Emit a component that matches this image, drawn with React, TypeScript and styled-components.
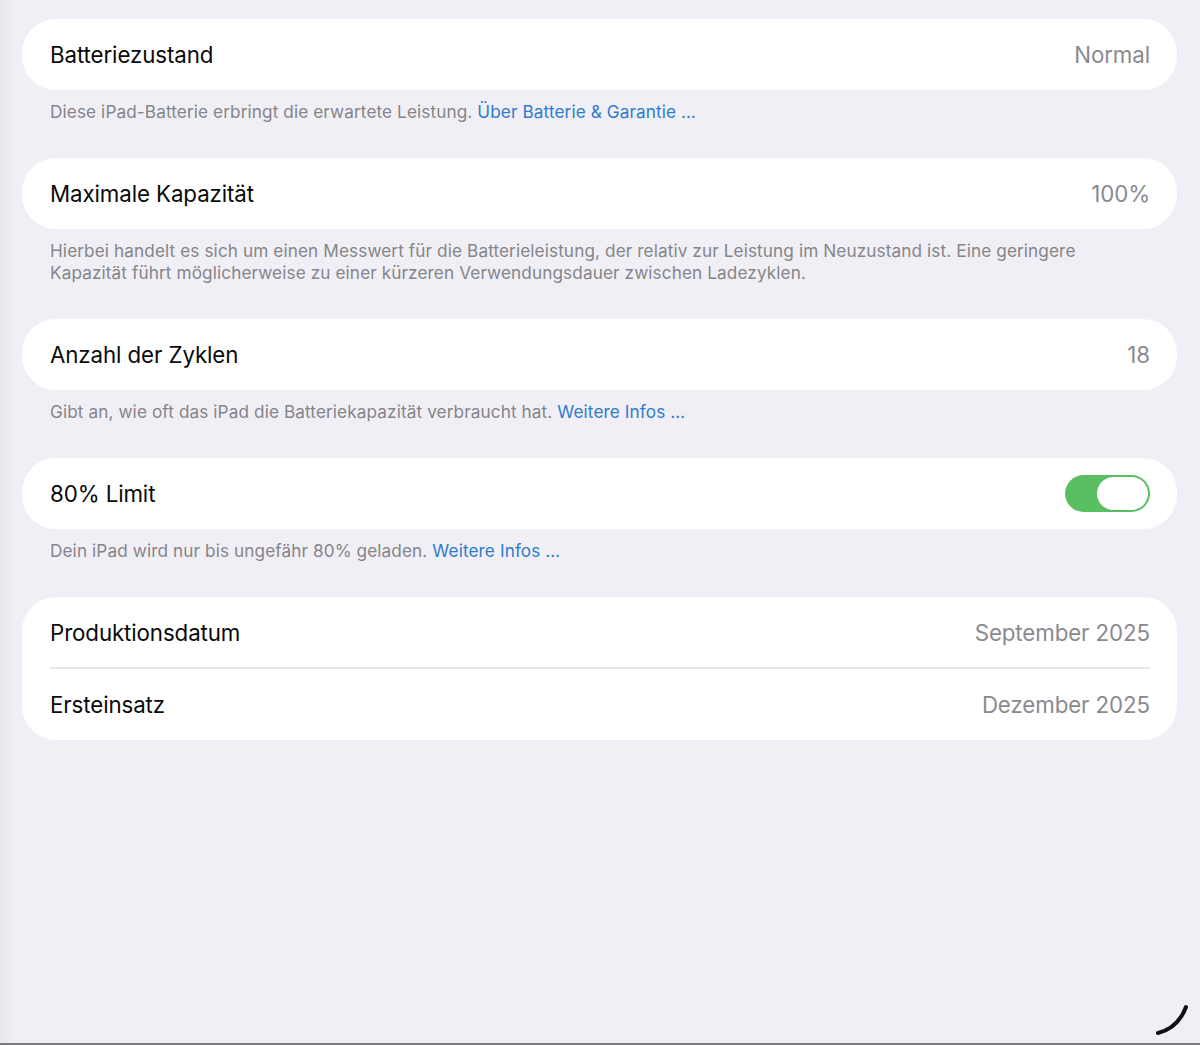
import styled, { createGlobalStyle } from 'styled-components';

const GlobalStyle = createGlobalStyle`
  html, body {
    margin: 0;
    padding: 0;
    background: #f0eff5;
  }
  body {
    font-family: Inter, "Noto Sans", "Liberation Sans", sans-serif;
    -webkit-font-smoothing: antialiased;
  }
`;

const Screen = styled.div`
  position: relative;
  width: 1200px;
  height: 1045px;
  box-sizing: border-box;
  padding: 19px 23px 0 22px;
  background: linear-gradient(to right, #e9e8ee 0, #f0eff5 14px);
  border-bottom: 2px solid #7a7a7c;
  overflow: hidden;
`;

const Section = styled.section`
  display: flex;
  flex-direction: column;
`;

const Card = styled.div`
  background: #ffffff;
  border-radius: 34px;
  padding: 0 27px 0 28px;
`;

const Row = styled.div<{ $divider?: boolean }>`
  display: flex;
  align-items: center;
  justify-content: space-between;
  height: ${({ $divider }) => ($divider ? '70px' : '71px')};
  border-bottom: ${({ $divider }) => ($divider ? '2px solid #e6e6ea' : 'none')};
`;

const Label = styled.span`
  font-size: 22.3px;
  color: #0a0a0a;
  letter-spacing: -0.1px;
`;

const Value = styled.span`
  font-size: 22.3px;
  color: #8a8a8e;
  letter-spacing: -0.1px;
`;

const Footer = styled.p`
  margin: 0;
  padding: 11px 28px 35px 28px;
  font-size: 17.2px;
  line-height: 22px;
  color: #85858a;
  letter-spacing: 0.1px;
`;

const Link = styled.a`
  color: #2f7bcf;
  text-decoration: none;
`;

const Toggle = styled.div`
  width: 85px;
  height: 37px;
  border-radius: 19px;
  background: #5abf62;
  box-sizing: border-box;
  padding: 2px 2px;
  display: flex;
  justify-content: flex-end;
`;

const Knob = styled.div`
  width: 51px;
  height: 33px;
  border-radius: 17px;
  background: #ffffff;
`;

const Corner = styled.svg`
  position: absolute;
  right: 4px;
  bottom: 6px;
`;

type Item = { label: string; value?: React.ReactNode };

const sections: { rows: Item[]; footer?: React.ReactNode }[] = [
  {
    rows: [{ label: 'Batteriezustand', value: 'Normal' }],
    footer: (
      <>
        Diese iPad-Batterie erbringt die erwartete Leistung. <Link>Über Batterie &amp; Garantie …</Link>
      </>
    ),
  },
  {
    rows: [{ label: 'Maximale Kapazität', value: '100%' }],
    footer: (
      <>
        Hierbei handelt es sich um einen Messwert für die Batterieleistung, der relativ zur Leistung im Neuzustand ist. Eine geringere
        <br />
        Kapazität führt möglicherweise zu einer kürzeren Verwendungsdauer zwischen Ladezyklen.
      </>
    ),
  },
  {
    rows: [{ label: 'Anzahl der Zyklen', value: '18' }],
    footer: (
      <>
        Gibt an, wie oft das iPad die Batteriekapazität verbraucht hat. <Link>Weitere Infos …</Link>
      </>
    ),
  },
  {
    rows: [
      {
        label: '80% Limit',
        value: (
          <Toggle>
            <Knob />
          </Toggle>
        ),
      },
    ],
    footer: (
      <>
        Dein iPad wird nur bis ungefähr 80% geladen. <Link>Weitere Infos …</Link>
      </>
    ),
  },
  {
    rows: [
      { label: 'Produktionsdatum', value: 'September 2025' },
      { label: 'Ersteinsatz', value: 'Dezember 2025' },
    ],
  },
];

export default function App() {
  return (
    <>
      <GlobalStyle />
      <Screen>
        {sections.map((section, i) => (
          <Section key={i}>
            <Card>
              {section.rows.map((row, j) => (
                <Row key={row.label} $divider={j < section.rows.length - 1}>
                  <Label>{row.label}</Label>
                  {typeof row.value === 'string' ? <Value>{row.value}</Value> : row.value}
                </Row>
              ))}
            </Card>
            {section.footer && <Footer>{section.footer}</Footer>}
          </Section>
        ))}
        <Corner width="40" height="36" viewBox="0 0 40 36">
          <path d="M2 32 C14 29 24 22 30 6" fill="none" stroke="#111" strokeWidth="4" strokeLinecap="round" />
        </Corner>
      </Screen>
    </>
  );
}
